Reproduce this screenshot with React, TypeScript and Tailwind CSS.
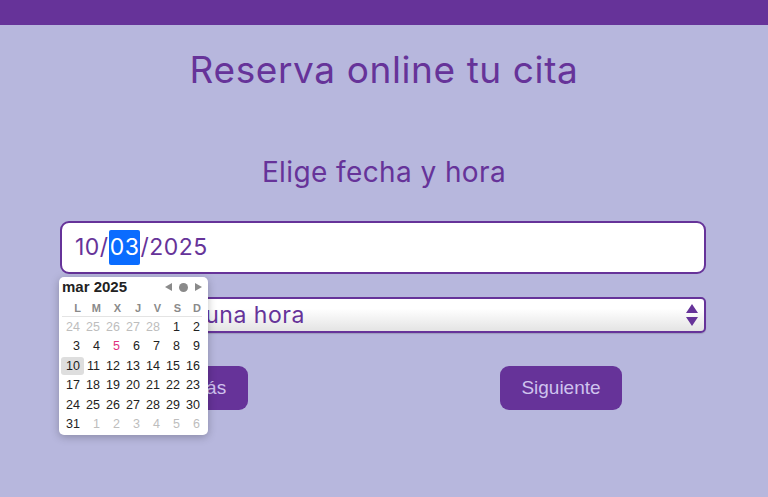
import React from "react";

const PURPLE = "#663399";

const weeks: { d: number; muted?: boolean; today?: boolean; sel?: boolean }[][] = [
  [24, 25, 26, 27, 28].map((d) => ({ d, muted: true })).concat([{ d: 1 }, { d: 2 }]),
  [{ d: 3 }, { d: 4 }, { d: 5, today: true }, { d: 6 }, { d: 7 }, { d: 8 }, { d: 9 }],
  [{ d: 10, sel: true }, { d: 11 }, { d: 12 }, { d: 13 }, { d: 14 }, { d: 15 }, { d: 16 }],
  [17, 18, 19, 20, 21, 22, 23].map((d) => ({ d })),
  [24, 25, 26, 27, 28, 29, 30].map((d) => ({ d })),
  [{ d: 31 }].concat([1, 2, 3, 4, 5, 6].map((d) => ({ d, muted: true }))),
];

const Calendar = () => (
  <div className="absolute left-[-1px] top-[calc(100%+3px)] z-10 w-[149px] rounded-[5px] bg-white pb-[1px] pl-[3px] pr-[6px] font-['Liberation_Sans',sans-serif] shadow-[0_2px_8px_rgba(0,0,0,0.25)]">
    <div className="-mr-[4px] flex h-[20px] items-center justify-between">
      <span className="text-[15px] font-bold text-[#222]">mar 2025</span>
      <div className="flex items-center gap-[7px] pr-[4px] text-[#8a8a8a]">
        <svg width="7" height="8" viewBox="0 0 7 8"><path d="M7 0v8L0 4z" fill="currentColor" /></svg>
        <svg width="9" height="9" viewBox="0 0 9 9"><circle cx="4.5" cy="4.5" r="4.5" fill="currentColor" /></svg>
        <svg width="7" height="8" viewBox="0 0 7 8"><path d="M0 0v8l7-4z" fill="currentColor" /></svg>
      </div>
    </div>
    <div className="mt-[3px] grid grid-cols-7 border-b border-[#e4e4e4] text-right text-[11px] font-bold leading-[16px] text-[#8a8a8a]">
      {["L", "M", "X", "J", "V", "S", "D"].map((w) => (
        <span key={w} className="pr-[1px]">{w}</span>
      ))}
    </div>
    <div>
      {weeks.map((row, i) => (
        <div key={i} className="grid h-[19.5px] grid-cols-7 items-center text-[12.5px] leading-[16px]">
          {row.map((c, j) => (
            <div key={j} className="flex justify-end pr-[2px]">
              <span
                className={
                  c.sel
                    ? "-mr-[4px] flex h-[18px] items-center rounded-[3px] bg-[#dedede] pl-[5px] pr-[4px] text-[#222]"
                    : c.muted
                    ? "text-[#bdbdbd]"
                    : c.today
                    ? "text-[#e0307f]"
                    : "text-[#222]"
                }
              >
                {c.d}
              </span>
            </div>
          ))}
        </div>
      ))}
    </div>
  </div>
);

export default function App() {
  return (
    <div className="min-h-[497px] bg-[#b7b7dd] font-['Inter',sans-serif] text-[#663399]">
      <div className="h-[25px] bg-[#663399]" />
      <h1 className="mt-[22px] text-center text-[37px] font-normal leading-[46px] tracking-[0.6px]">
        Reserva online tu cita
      </h1>
      <h2 className="mt-[61px] text-center text-[28px] font-normal leading-[36px] tracking-[0.4px]">
        Elige fecha y hora
      </h2>
      <div className="ml-[60px] mr-[62px] mt-[31px]">
        <div className="relative">
          <div className="flex h-[53px] items-center rounded-[9px] border-2 border-[#663399] bg-white pl-[13px] text-[23px] tracking-[0.5px]">
            <span>10/</span>
            <span className="rounded-[2px] bg-[#0a6cff] px-[1px] text-white">03</span>
            <span>/2025</span>
          </div>
          <Calendar />
        </div>
        <div className="mt-[23px] flex h-[36px] items-center justify-between rounded-[5px] border-2 border-[#663399] bg-gradient-to-b from-white from-30% to-[#e4e4e4] pl-[12px] pr-[6px] text-[23px] tracking-[0.5px] shadow-[0_1px_1px_rgba(0,0,0,0.15)]">
          <span>Selecciona una hora</span>
          <svg width="12" height="22" viewBox="0 0 12 22">
            <path d="M6 0l6 9H0z M0 13h12l-6 9z" fill={PURPLE} />
          </svg>
        </div>
        <div className="mt-[33px] flex gap-[252px] pl-[100px] font-['Liberation_Sans',sans-serif]">
          <button className="h-[44px] w-[88px] rounded-[9px] bg-[#663399] text-[19px] text-[#cfc3ee]">
            Atrás
          </button>
          <button className="h-[44px] w-[122px] rounded-[9px] bg-[#663399] text-[19px] text-[#cfc3ee]">
            Siguiente
          </button>
        </div>
      </div>
    </div>
  );
}
